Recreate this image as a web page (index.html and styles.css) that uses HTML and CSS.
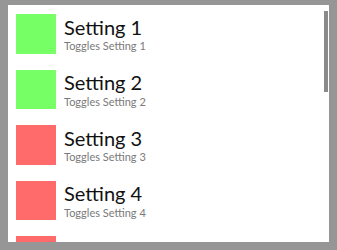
FILE: index.html
```html
<!DOCTYPE html>
<html>
<head>
<meta charset="utf-8">
<link rel="stylesheet" href="styles.css">
</head>
<body>
<div class="panel">
  <div class="list">
    <div class="row"><div class="swatch on"></div><div class="text"><div class="title">Setting 1</div><div class="sub">Toggles Setting 1</div></div></div>
    <div class="row"><div class="swatch on"></div><div class="text"><div class="title">Setting 2</div><div class="sub">Toggles Setting 2</div></div></div>
    <div class="row"><div class="swatch off"></div><div class="text"><div class="title">Setting 3</div><div class="sub">Toggles Setting 3</div></div></div>
    <div class="row"><div class="swatch off"></div><div class="text"><div class="title">Setting 4</div><div class="sub">Toggles Setting 4</div></div></div>
    <div class="row"><div class="swatch off"></div><div class="text"><div class="title">Setting 5</div><div class="sub">Toggles Setting 5</div></div></div>
  </div>
  <div class="thumb"></div>
</div>
</body>
</html>
```
FILE: styles.css
```css
html, body {
  margin: 0;
  padding: 0;
  background: #969696;
}
body {
  padding: 5px 8px;
  font-family: Lato, "Liberation Sans", sans-serif;
}
.panel {
  position: relative;
  width: 321px;
  height: 237px;
  background: #ffffff;
  overflow: hidden;
  box-sizing: border-box;
  padding: 9px 0 0 8px;
}
.list {
  display: flex;
  flex-direction: column;
}
.row {
  display: flex;
  align-items: flex-start;
  gap: 8.5px;
  height: 55.5px;
  flex-shrink: 0;
}
.swatch {
  width: 39.5px;
  height: 39.5px;
  flex-shrink: 0;
}
.swatch.on { background: #77ff66; }
.swatch.off { background: #ff6b6b; }
.text {
  display: flex;
  flex-direction: column;
  padding-top: 1.7px;
}
.title {
  font-size: 20px;
  line-height: 22px;
  color: #111111;
}
.sub {
  margin-top: 1.5px;
  font-size: 11px;
  line-height: 13px;
  color: #7a7a7a;
}
.thumb {
  position: absolute;
  left: 316px;
  top: 5.7px;
  width: 4px;
  height: 81px;
  background: #8a8a8a;
}
```
